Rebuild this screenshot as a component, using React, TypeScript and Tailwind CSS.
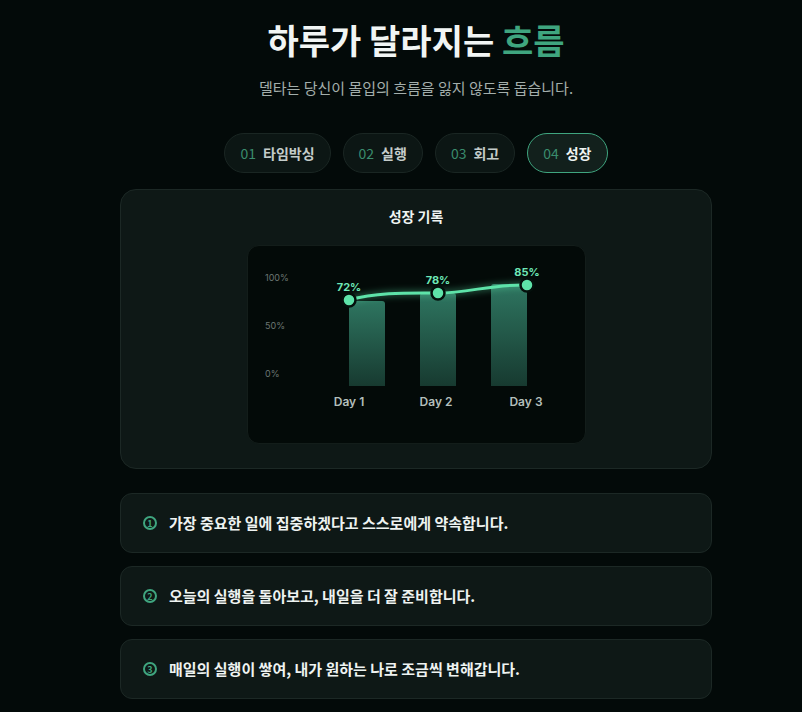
const tabs = [
  { no: "01", label: "타임박싱" },
  { no: "02", label: "실행" },
  { no: "03", label: "회고" },
  { no: "04", label: "성장" },
];

const steps = [
  { no: "1", text: "가장 중요한 일에 집중하겠다고 스스로에게 약속합니다." },
  { no: "2", text: "오늘의 실행을 돌아보고, 내일을 더 잘 준비합니다." },
  { no: "3", text: "매일의 실행이 쌓여, 내가 원하는 나로 조금씩 변해갑니다." },
];

// chart points, in the inner box's coordinates
const points = [
  { x: 101, y: 54, label: "72%" },
  { x: 190, y: 47, label: "78%" },
  { x: 279, y: 39, label: "85%" },
];

const bars = [
  { x: 101, top: 55 },
  { x: 172, top: 47 },
  { x: 243, top: 38 },
];

const GrowthChart = () => {
  return (
    <div className="w-[339px] h-[199px] rounded-xl bg-[#030a08] border border-[#131d1a] overflow-hidden">
      <svg width="339" height="199" viewBox="0 0 339 199" style={{ fontFamily: "Inter, 'Noto Sans', sans-serif" }}>
        <defs>
          <linearGradient id="bar" x1="0" y1="0" x2="0" y2="1">
            <stop offset="0%" stopColor="#2e7560" />
            <stop offset="100%" stopColor="#173a30" />
          </linearGradient>
          <filter id="glow" x="-20%" y="-200%" width="140%" height="500%">
            <feGaussianBlur stdDeviation="3" />
          </filter>
        </defs>

        <text x="17" y="35" fontSize="9" fill="#6b7672">100%</text>
        <text x="17" y="83" fontSize="9" fill="#6b7672">50%</text>
        <text x="17" y="131" fontSize="9" fill="#6b7672">0%</text>

        {bars.map((b) => (
          <path
            key={b.x}
            d={`M${b.x} ${b.top + 3} Q${b.x} ${b.top} ${b.x + 3} ${b.top} L${b.x + 33} ${b.top} Q${b.x + 36} ${b.top} ${b.x + 36} ${b.top + 3} L${b.x + 36} 140 L${b.x} 140 Z`}
            fill="url(#bar)"
          />
        ))}

        <path
          d="M101 54 C130 46 160 47 190 47 C220 47 245 38 279 39"
          fill="none"
          stroke="#5ee3a9"
          strokeWidth="6"
          opacity="0.35"
          filter="url(#glow)"
        />
        <path
          d="M101 54 C130 46 160 47 190 47 C220 47 245 38 279 39"
          fill="none"
          stroke="#5ee3a9"
          strokeWidth="3"
          strokeLinecap="round"
        />

        {points.map((p) => (
          <g key={p.label}>
            <circle cx={p.x} cy={p.y} r="6.5" fill="#5ee3a9" stroke="#04100c" strokeWidth="2.5" />
            <text x={p.x} y={p.y - 9} textAnchor="middle" fontSize="11" fontWeight="700" fill="#6ee7b7">
              {p.label}
            </text>
          </g>
        ))}

        <text x="101" y="160" textAnchor="middle" fontSize="12" fontWeight="600" fill="#b3bfbb">Day 1</text>
        <text x="188" y="160" textAnchor="middle" fontSize="12" fontWeight="600" fill="#b3bfbb">Day 2</text>
        <text x="278" y="160" textAnchor="middle" fontSize="12" fontWeight="600" fill="#b3bfbb">Day 3</text>
      </svg>
    </div>
  );
};

export default function App() {
  return (
    <div
      className="min-h-screen w-full bg-[#030a09] text-white flex flex-col items-center pl-[30px]"
      style={{ fontFamily: "'Noto Sans CJK KR', 'Noto Sans', sans-serif" }}
    >
      {/* Heading */}
      <h1 className="mt-[17px] text-[34px] leading-[46px] font-bold text-[#f1f5f4]">
        하루가 달라지는 <span className="text-[#3fa57f]">흐름</span>
      </h1>
      <p className="mt-[15px] text-[15px] leading-5 text-[#a3aeab]">
        델타는 당신이 몰입의 흐름을 잃지 않도록 돕습니다.
      </p>

      {/* Tabs */}
      <div className="mt-[35px] flex gap-3">
        {tabs.map((t, i) => {
          const active = i === 3;
          return (
            <div
              key={t.no}
              className={`h-10 px-[15px] rounded-full flex items-center gap-[7px] text-[14px] border ${
                active ? "border-[#3fa57f] bg-[#12201c]" : "border-[#1a2623] bg-[#0c1614]"
              }`}
            >
              <span className="text-[#3a8c6d]">{t.no}</span>
              <span className={`font-bold ${active ? "text-[#eef3f1]" : "text-[#c4ccca]"}`}>{t.label}</span>
            </div>
          );
        })}
      </div>

      {/* Growth card */}
      <div className="mt-[16px] w-[592px] h-[280px] rounded-2xl bg-[#0e1816] border border-[#1c2825] flex flex-col items-center">
        <h2 className="mt-[16px] text-[14px] leading-5 font-bold text-[#eef3f1]">성장 기록</h2>
        <div className="mt-[19px]">
          <GrowthChart />
        </div>
      </div>

      {/* Steps */}
      <div className="mt-[24px] w-[592px] flex flex-col gap-[13px]">
        {steps.map((s) => (
          <div
            key={s.no}
            className="h-[60px] rounded-xl bg-[#0e1816] border border-[#1c2825] flex items-center pl-[22px] gap-[12px]"
          >
            <span className="w-[14px] h-[14px] rounded-full border-2 border-[#3fa57f] text-[#3fa57f] text-[9px] leading-none font-bold flex items-center justify-center">
              {s.no}
            </span>
            <span className="text-[15px] font-bold text-[#eef3f1]">{s.text}</span>
          </div>
        ))}
      </div>
    </div>
  );
}
